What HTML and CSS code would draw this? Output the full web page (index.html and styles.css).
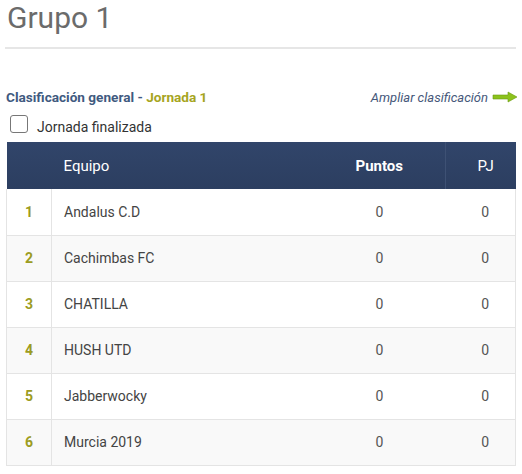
FILE: index.html
```html
<!DOCTYPE html>
<html lang="es">
<head>
<meta charset="utf-8">
<title>Grupo 1</title>
<link rel="stylesheet" href="styles.css">
</head>
<body>
<div class="page">
  <h1 class="title">Grupo 1</h1>
  <hr class="rule">
  <div class="bar">
    <div class="heading">Clasificación general - <span class="jornada">Jornada 1</span></div>
    <a class="more" href="#">Ampliar clasificación
      <svg class="arrow" width="26" height="12" viewBox="0 0 26 12"><path d="M1 4h15V1l9 5-9 5V8H1z" fill="#8cc21c" stroke="#6a9a10" stroke-width="0.6"/></svg>
    </a>
  </div>
  <label class="check"><span class="box"></span><span class="label">Jornada finalizada</span></label>
  <table class="standings">
    <thead>
      <tr><th class="pos"></th><th class="team">Equipo</th><th class="pts">Puntos</th><th class="pj">PJ</th></tr>
    </thead>
    <tbody>
      <tr><td class="pos">1</td><td class="team">Andalus C.D</td><td class="num">0</td><td class="num">0</td></tr>
      <tr><td class="pos">2</td><td class="team">Cachimbas FC</td><td class="num">0</td><td class="num">0</td></tr>
      <tr><td class="pos">3</td><td class="team">CHATILLA</td><td class="num">0</td><td class="num">0</td></tr>
      <tr><td class="pos">4</td><td class="team">HUSH UTD</td><td class="num">0</td><td class="num">0</td></tr>
      <tr><td class="pos">5</td><td class="team">Jabberwocky</td><td class="num">0</td><td class="num">0</td></tr>
      <tr><td class="pos">6</td><td class="team">Murcia 2019</td><td class="num">0</td><td class="num">0</td></tr>
    </tbody>
  </table>
</div>
</body>
</html>
```
FILE: styles.css
```css
* { box-sizing: border-box; }
html, body { margin: 0; padding: 0; background: #fff; }
body { font-family: Roboto, "Liberation Sans", sans-serif; color: #444; }
.page { padding: 0 6px 0 6px; width: 522px; }
.title {
  margin: 0;
  padding: 0 0 0 1px;
  font-size: 30px;
  font-weight: 400;
  line-height: 36px;
  color: #6b6b6b;
}
.rule {
  margin: 11px 0 0 -1px;
  border: 0;
  height: 2px;
  background: #e6e6e6;
}
.bar {
  display: flex;
  justify-content: space-between;
  align-items: center;
  margin-top: 40px;
  height: 16px;
}
.heading { font-size: 13.6px; font-weight: 700; color: #3f5a80; }
.jornada { color: #a6a51f; }
.more {
  display: flex;
  align-items: center;
  gap: 4px;
  font-size: 13px;
  font-style: italic;
  color: #46587a;
  text-decoration: none;
  margin-right: -2px;
}
.arrow { display: block; }
.check {
  display: flex;
  align-items: flex-start;
  margin: 10px 0 0 4px;
  font-size: 14px;
  color: #333;
  height: 20px;
}
.box {
  width: 18px;
  height: 18px;
  border: 1px solid #777;
  border-radius: 3px;
  margin-right: 9px;
  background: #fff;
}
.label { padding-top: 4px; line-height: 16px; }
.standings {
  margin-top: 7px;
  width: 510px;
  border-collapse: collapse;
  font-size: 14px;
}
.standings thead tr {
  background: linear-gradient(180deg, #31456a 0%, #2c3e60 100%);
}
.standings th {
  height: 47px;
  color: #fff;
  font-weight: 400;
  font-size: 15px;
  padding: 0;
}
.standings th.team { text-align: left; padding-left: 12px; }
.standings th.pts { font-weight: 700; width: 132px; text-align: center; }
.standings th.pj { width: 70px; text-align: center; padding-left: 10px; border-left: 1px solid #3e5174; }
.standings th.pos { width: 45px; }
.standings td {
  height: 46px;
  padding: 0;
  border-bottom: 1px solid #e4e4e4;
  color: #444;
}
.standings tbody tr { border-left: 1px solid #e4e4e4; border-right: 1px solid #e4e4e4; }
.standings tbody tr:nth-child(even) { background: #f9f9f9; }
.standings td.pos {
  text-align: center;
  font-weight: 700;
  color: #9c9c22;
  border-right: 1px solid #e4e4e4;
}
.standings td.team { padding-left: 12px; }
.standings td.num { text-align: center; color: #555; }
.standings td.num:last-child { padding-left: 10px; }
```
